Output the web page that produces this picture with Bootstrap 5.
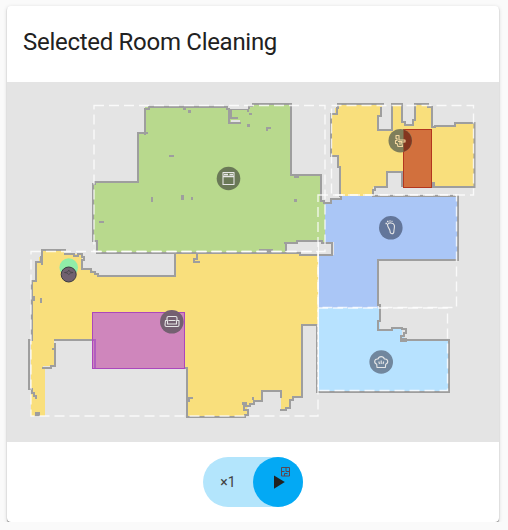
<!DOCTYPE html>
<html lang="en">
<head>
<meta charset="utf-8">
<meta name="viewport" content="width=device-width, initial-scale=1">
<title>Selected Room Cleaning</title>
<link href="https://cdn.jsdelivr.net/npm/bootstrap@5.3.0/dist/css/bootstrap.min.css" rel="stylesheet">
<style>
body{background:#fafafa;font-family:Roboto,sans-serif;color:#212121;overflow:hidden}
.vacuum-card{width:492px;height:516px;margin:6px 0 0 7px;border-radius:4px;box-shadow:0 1px 1px rgba(0,0,0,.5),0 1px 4px rgba(0,0,0,.14)}
.vacuum-head{height:76px;padding:0 16px 4px}
.vacuum-title{font-size:24px;line-height:32px;font-weight:400;letter-spacing:-.288px}
.map-view{width:492px;height:360px;background:#e4e4e4}
.run-pill{width:100px;height:50px;background:#b3e5fc}
.repeat-btn,.play-btn{width:50px;height:50px;border:0;padding:0;color:#424242;font-size:14px}
.repeat-btn{background:none}
.play-btn{background:#03a9f4}
.wall{fill:none;stroke:#9e9e9e;stroke-width:2}
.bits{fill:#9e9e9e}
.zone{fill:none;stroke:#fff;stroke-opacity:.8;stroke-width:1.4;stroke-dasharray:10 5}
.glyph{fill:none;stroke:#e6e6e6;stroke-width:1.1;stroke-linejoin:round}
</style>
</head>
<body>
<main class="vacuum-card bg-white overflow-hidden d-flex flex-column">
  <header class="vacuum-head d-flex align-items-center"><h1 class="vacuum-title m-0">Selected Room Cleaning</h1></header>
  <svg class="map-view d-block flex-shrink-0" viewBox="7 82 492 360" role="img" aria-label="Floor map">
    <!-- rooms -->
    <path fill="#b8d98d" d="M97 252V241H94V182H138V132H145V107H228V110H248L253 104H291V175H321V201H325V242H297V243H285V252Z"/>
    <path fill="#f9df7c" d="M42 250H64V254H82V269H91L98 276H175V253H300V255H318V325H302V396H296L290 400V408L281 410V391H262V401H254L247 408V414L244 417H187V368H95V340H54V366H43V368H45V416H31V281H36V263H39V257H42Z"/>
    <path fill="#f9df7c" d="M341 196V167H338V156H331V114H335V108H338V104H382V116H378V130H392V104H402V122L406 125H412L415 116V104H428L432 108V126H455V123H474V187H402V172H387V187H373V196Z"/>
    <path fill="#aac6f6" d="M325 203H332V199H341V196H457V259H378V308H318V255H334V242H325Z"/>
    <path fill="#b7e2ff" d="M318 308H380V330H392V328H402V335H404V339H448V391H318Z"/>
    <!-- walls -->
    <g class="wall">
      <path d="M300 253H97V241H93V184H95V182H138V133H148M145 135V109H149V107H227V109H248V112M253 106H249V109M252 104H291V175H321V201H324V203H331V199H341V196M229 109V123H241M231 109V118H238M300 252V255H332V243H322V241H297V243H284M286 243V251"/>
      <path d="M66 250H42V257H41V262H36V281H32V340H29V389H32V393H34V396H36V399M42 257V265M64 254H74V256H78V254H82V257H84V260H82V269H91V272H95V274H98V276H175V253M54 340H95M95 340V368M55 343V366H51V368H42M185 368H187V417H245V415H248V410H244V406H250V404H254V401H262V391H281V398M280 410H286V408H290V400H293V397H302V325H319M317 325V392H449V340H401V336H404V333H406V329H402V328H392V330H378V321H380V305H378V260H458V196H372"/>
      <path d="M197 253V259H194V262H200"/>
      <path d="M340 197V167H338V156H331V114H337V108H338V104H384M381 107V116H378V130H392V104H402V122H405V125H413V120H415V104H428V107H432V127H435V126H455V123H474.500V187H404M402 187V172H387V187H375V190H373V196"/>
      <path d="M392 104H399M415 104H428"/>
    </g>
    <path fill="#e4e4e4" d="M231 120H240V122H231ZM230 108H248V109H230Z"/>
    <g class="bits">
      <path d="M183 108h3v2h-3zM188 110h3v3h-3zM169 155h5v2h-5zM151 197h2v5h-2zM181 195h3v5h-3zM191 197h2v3h-2zM99 221h5v2h-5zM249 113h3v2h-3zM247 124h3v3h-3zM266 127h5v2h-3v2h-2zM294 175h5v3h-5zM294 199h3v3h-3zM259 249h14v3h-14zM33 296h2v5h-2zM40 298h2v5h-2zM52 348h3v2h-3zM35 412h5v4h-5zM187 397h6v2h-3v3h-3zM252 397h2v3h-2zM242 402h5v3h-5zM432 182h3v4h-3zM400 338h7v4h-7z"/>
    </g>
    <!-- zone outlines -->
    <g class="zone">
      <rect x="94" y="105.500" width="231" height="146"/>
      <rect x="331.500" y="105.500" width="142" height="89.500"/>
      <rect x="318" y="195" width="138.500" height="112.500"/>
      <rect x="31" y="251.500" width="287" height="164.500"/>
      <rect x="318" y="308" width="129.500" height="82.500"/>
      <path stroke-dasharray="none" stroke-width="1" d="M318.500 242V391"/>
    </g>
    <rect x="92.500" y="312.500" width="92" height="56" fill="#cf86bc" stroke="#ab47bc"/>
    <path d="M93 340H95V368" fill="none" stroke="#b15fc0" stroke-width="2"/>
    <rect x="403.500" y="129.500" width="28" height="58" fill="#d2703d" stroke="#b3361e"/>
    <!-- dock and robot -->
    <circle cx="68.700" cy="267.500" r="9.300" fill="#90eda8"/>
    <circle cx="68.700" cy="274.500" r="7.500" fill="#706170" stroke="#383a40"/>
    <path d="M64.500 272.500l3-.5 1.300-2 1.300 2 3 .5-2.500.5-1.800 1.600-1.800-1.600z" fill="none" stroke="#454548" stroke-width=".8"/>
    <!-- room markers -->
    <circle cx="228.500" cy="178.500" r="11.800" fill="#6a7957"/>
    <g class="glyph"><path d="M223 172.500H234V184.500H223Z"/><path d="M223 176.500H234M224 174.500H228M229.500 174.500H233" stroke-width="1.300"/></g>
    <circle cx="400.300" cy="140.700" r="11.800" fill="#7f7e5b"/>
    <path d="M403.500 129.400a11.800 11.800 0 0 1 0 22.600z" fill="#84351f"/>
    <g class="glyph" style="stroke:#f3d6a0"><path d="M396 135.500h3v4.500h6v2H401.500l1 4.500h-4.500l-1-3h-1.500v-3h1.500v-2h-1zM398 141.500h4M400 142v3"/></g>
    <circle cx="390.800" cy="227.800" r="11.800" fill="#63769a"/>
    <g class="glyph"><path d="M387.500 224.500c1-2.200 6-2.200 6.800.7.600 2.300-.4 4-.4 6 0 3.500-3.800 3.300-3.800.3 0-3-2.800-4-2.600-7z"/><path d="M385.500 223.500h1.500M387 221.500h1.500M389.500 221h1M391.500 221.300h1" stroke-width="1.300"/></g>
    <circle cx="171.800" cy="321.800" r="11.800" fill="#746071"/>
    <g class="glyph"><path d="M167 320.500V318q0-1.500 1.500-1.500h7q1.500 0 1.500 1.500v2.500M165.500 320.500h2v3.500h9v-3.500h2.500v4.500q0 1.500-1.500 1.500h-11q-1.500 0-1.500-1.500zM168.500 320.500h7"/></g>
    <circle cx="381.200" cy="362" r="11.800" fill="#71879e"/>
    <g class="glyph"><path d="M377 367.500l-.3-3.200c-3.200-1.300-2.500-5.800 1.300-5.300 1-3.200 5.400-3.200 6.400 0 3.800-.5 4.500 4 1.300 5.300l-.3 3.200zM378.800 361.500l.7 2.500M381.200 360.500v3.500M383.700 361.500l-.7 2.500"/></g>
  </svg>
  <footer class="flex-grow-1 d-flex justify-content-center align-items-center pb-0">
    <div class="run-pill rounded-pill d-flex">
      <button class="repeat-btn" type="button">×1</button>
      <button class="play-btn rounded-circle" type="button" aria-label="Start">
        <svg class="d-block" width="50" height="50" viewBox="253 457 50 50">
          <path d="M274 475.500L284.800 482L274 488.800Z" fill="#212121"/>
          <path d="M281.500 467.500H289.500V476H281.500ZM281.500 471.500H284.500M286 467.500V471.500H289.500M284.500 476V473.500H287.500" fill="none" stroke="#5b4650"/>
        </svg>
      </button>
    </div>
  </footer>
</main>
<script src="https://cdn.jsdelivr.net/npm/bootstrap@5.3.0/dist/js/bootstrap.bundle.min.js"></script>
</body>
</html>
